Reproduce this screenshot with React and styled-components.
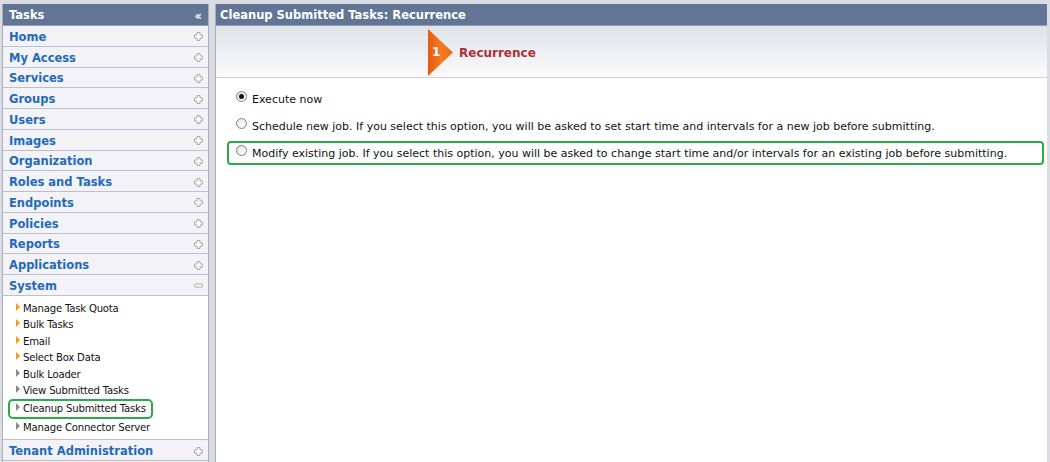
import React from 'react';
import styled, { createGlobalStyle } from 'styled-components';

const GlobalStyle = createGlobalStyle`
  html, body {
    margin: 0;
    padding: 0;
    background: #d9dce3;
  }
  body {
    font-family: "DejaVu Sans", Verdana, sans-serif;
  }
`;

const Page = styled.div`
  display: flex;
  height: 462px;
  box-sizing: border-box;
  padding: 4px 3px 0 2px;
  gap: 6px;
  overflow: hidden;
`;

const Sidebar = styled.div`
  width: 205px;
  flex-shrink: 0;
  display: flex;
  flex-direction: column;
  border-left: 1px solid #a9afbd;
  border-right: 1px solid #a9afbd;
  background: #f3f2f6;
`;

const PanelHeader = styled.div`
  height: 22px;
  box-sizing: border-box;
  background: #627594;
  color: #fff;
  font-weight: bold;
  font-size: 11.5px;
  display: flex;
  align-items: center;
  justify-content: space-between;
  padding: 1px 6px 0 6px;
  border-bottom: 1px solid #8d9bb3;
`;

const Collapse = styled.span`
  font-size: 13px;
  font-weight: bold;
  color: #e8ecf3;
  letter-spacing: -3px;
  margin-right: 3px;
`;

const NavRow = styled.div`
  height: 20.75px;
  box-sizing: border-box;
  display: flex;
  align-items: center;
  justify-content: space-between;
  padding: 2px 5px 0 6px;
  border-bottom: 1px solid #b9c0ce;
  color: #1f6ab9;
  font-weight: bold;
  font-size: 11.5px;
`;

const SubList = styled.ul`
  list-style: none;
  margin: 0;
  padding: 4px 0 4px 0;
  background: #fff;
  border-bottom: 1px solid #b9c0ce;
`;

const SubItem = styled.li`
  display: flex;
  align-items: center;
  gap: 3px;
  height: 16.5px;
  padding-left: 13px;
  font-size: 10.1px;
  color: #111;
  letter-spacing: -0.2px;
  white-space: nowrap;
`;

const HighlightItem = styled(SubItem)`
  height: 16px;
  margin: 0 55px 0 5px;
  padding-left: 6px;
  border: 2px solid #2aab48;
  border-radius: 5px;
`;

const Bullet = styled.span`
  width: 0;
  height: 0;
  border-top: 4px solid transparent;
  border-bottom: 4px solid transparent;
  border-left: 4px solid ${p => (p.orange ? '#f59a1b' : '#8a8a8a')};
  margin-top: -3px;
`;

const Main = styled.div`
  flex: 1;
  display: flex;
  flex-direction: column;
  background: #fff;
  border-left: 1px solid #a9afbd;
`;

const MainHeader = styled(PanelHeader)`
  padding-left: 4px;
  font-size: 11.5px;
`;

const StepBar = styled.div`
  height: 52px;
  box-sizing: border-box;
  background: linear-gradient(#dfe2e8, #fbfbfc);
  border-bottom: 1px solid #d6d2d6;
  display: flex;
  align-items: center;
  padding: 2px 0 0 212px;
`;

const Step = styled.div`
  position: relative;
  display: flex;
  align-items: center;
  height: 47px;
`;

const StepNumber = styled.span`
  position: absolute;
  left: 4px;
  top: 16px;
  color: #fff;
  font-weight: bold;
  font-size: 12px;
`;

const StepLabel = styled.span`
  margin-left: 5px;
  color: #ae2f38;
  font-weight: bold;
  font-size: 12px;
`;

const Options = styled.div`
  display: flex;
  flex-direction: column;
  padding: 8px 0 0 20px;
`;

const Option = styled.label`
  display: flex;
  align-items: center;
  gap: 5px;
  height: 27px;
  font-size: 11px;
  color: #111;
`;

const HighlightOption = styled(Option)`
  height: 20px;
  margin: 1px 3px 0 -9px;
  padding-left: 7px;
  border: 2px solid #2aab48;
  border-radius: 4px;
`;

const Radio = styled.span`
  width: 11px;
  height: 11px;
  box-sizing: border-box;
  border-radius: 50%;
  border: 1px solid #7e8389;
  background: radial-gradient(circle at 65% 65%, #ffffff, #dcdcdc);
  display: flex;
  align-items: center;
  justify-content: center;
  margin-top: -6px;
  &::after {
    content: '';
    width: 5px;
    height: 5px;
    border-radius: 50%;
    background: ${p => (p.checked ? '#111' : 'transparent')};
  }
`;

function Plus({ minus }) {
  return (
    <svg width="9" height="9" viewBox="0 0 9 9">
      {minus ? (
        <rect x="0.5" y="3" width="8" height="3" rx="1" fill="#fff" stroke="#a8a8a8" />
      ) : (
        <path
          d="M3 0.5h3v2.5h2.5v3h-2.5v2.5h-3v-2.5h-2.5v-3h2.5z"
          fill="#fff"
          stroke="#a8a8a8"
          strokeLinejoin="round"
        />
      )}
    </svg>
  );
}

function Arrow() {
  return (
    <svg width="26" height="47" viewBox="0 0 26 47">
      <defs>
        <linearGradient id="ar" x1="0" y1="0" x2="1" y2="0">
          <stop offset="0" stopColor="#e65a10" />
          <stop offset="0.5" stopColor="#f47a22" />
          <stop offset="1" stopColor="#f06a18" />
        </linearGradient>
      </defs>
      <polygon points="0,0 25,23.5 0,47" fill="url(#ar)" />
    </svg>
  );
}

const navItems = [
  'Home', 'My Access', 'Services', 'Groups', 'Users', 'Images', 'Organization',
  'Roles and Tasks', 'Endpoints', 'Policies', 'Reports', 'Applications',
];

const systemItems = [
  { label: 'Manage Task Quota', orange: true },
  { label: 'Bulk Tasks', orange: true },
  { label: 'Email', orange: true },
  { label: 'Select Box Data', orange: true },
  { label: 'Bulk Loader' },
  { label: 'View Submitted Tasks' },
  { label: 'Cleanup Submitted Tasks', highlight: true },
  { label: 'Manage Connector Server' },
];

export default function App() {
  return (
    <>
      <GlobalStyle />
      <Page>
        <Sidebar>
          <PanelHeader>
            Tasks
            <Collapse>‹‹</Collapse>
          </PanelHeader>
          {navItems.map(item => (
            <NavRow key={item}>
              {item}
              <Plus />
            </NavRow>
          ))}
          <NavRow>
            System
            <Plus minus />
          </NavRow>
          <SubList>
            {systemItems.map(item => {
              const Item = item.highlight ? HighlightItem : SubItem;
              return (
                <Item key={item.label}>
                  <Bullet orange={item.orange} />
                  {item.label}
                </Item>
              );
            })}
          </SubList>
          <NavRow>
            Tenant Administration
            <Plus />
          </NavRow>
        </Sidebar>
        <Main>
          <MainHeader>Cleanup Submitted Tasks: Recurrence</MainHeader>
          <StepBar>
            <Step>
              <Arrow />
              <StepNumber>1</StepNumber>
              <StepLabel>Recurrence</StepLabel>
            </Step>
          </StepBar>
          <Options>
            <Option>
              <Radio checked />
              Execute now
            </Option>
            <Option>
              <Radio />
              Schedule new job. If you select this option, you will be asked to set start time and intervals for a new job before submitting.
            </Option>
            <HighlightOption>
              <Radio />
              Modify existing job. If you select this option, you will be asked to change start time and/or intervals for an existing job before submitting.
            </HighlightOption>
          </Options>
        </Main>
      </Page>
    </>
  );
}
